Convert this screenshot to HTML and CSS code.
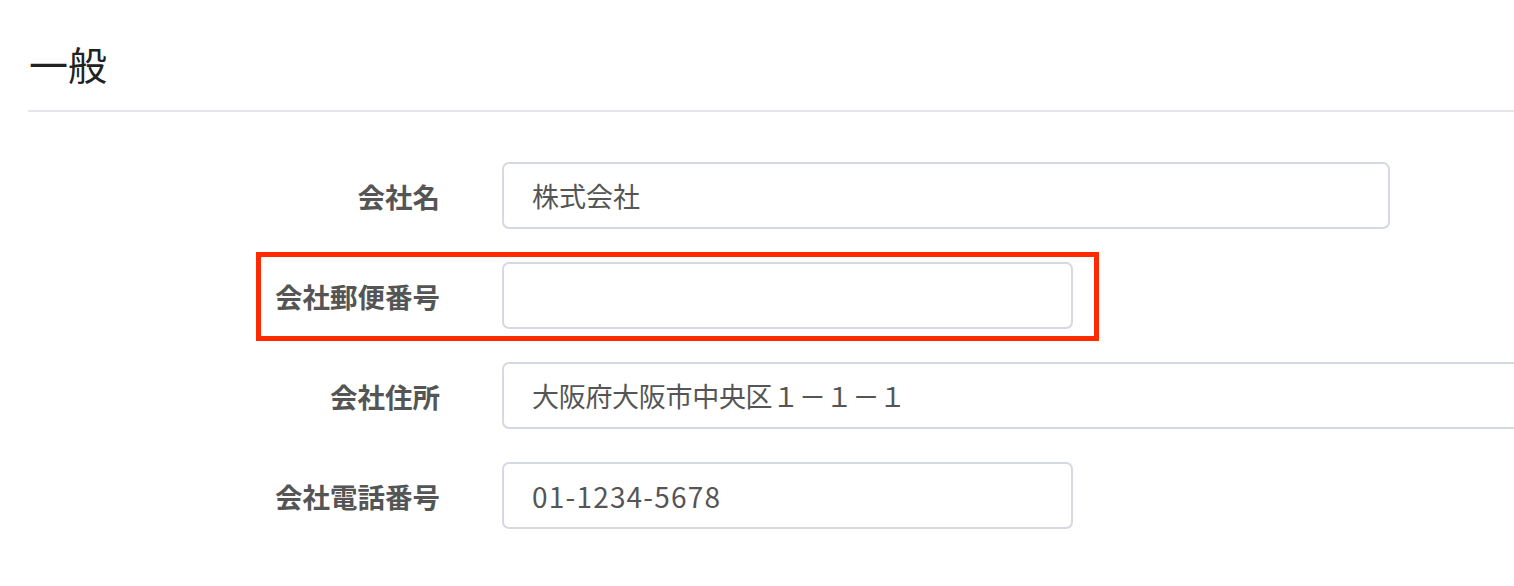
FILE: index.html
```html
<!DOCTYPE html>
<html lang="ja">
<head>
    <meta charset="UTF-8">
    <meta name="viewport" content="width=device-width, initial-scale=1.0">
    <title>一般</title>
    <link rel="stylesheet" href="styles.css">
</head>
<body>
    <div class="page">
        <h1>一般</h1>
        <hr class="divider">

        <!-- Company info -->
        <div class="form">
            <div class="row">
                <label class="label">会社名</label>
                <input class="field field-lg" type="text" value="株式会社">
            </div>
            <div class="row highlight">
                <label class="label">会社郵便番号</label>
                <input class="field field-md" type="text" value="">
            </div>
            <div class="row">
                <label class="label">会社住所</label>
                <input class="field field-xl address" type="text" value="大阪府大阪市中央区１－１－１">
            </div>
            <div class="row">
                <label class="label">会社電話番号</label>
                <input class="field field-md phone" type="text" value="01-1234-5678">
            </div>
        </div>
    </div>
</body>
</html>
```

FILE: styles.css
```css
body {
    font-family: "Noto Sans CJK JP", "Liberation Sans", sans-serif;
    background-color: #fff;
    margin: 0;
    padding: 0;
    overflow: hidden;
}
.page {
    padding: 38px 0 0 28px;
}
h1 {
    font-size: 39px;
    font-weight: 400;
    line-height: 50px;
    color: #222;
    margin: 0 0 22px 1px;
}
.divider {
    border: none;
    height: 2px;
    background-color: #e6e6ea;
    margin: 0;
}
.form {
    display: flex;
    flex-direction: column;
    gap: 33px;
    padding-top: 50px;
}
.row {
    display: grid;
    grid-template-columns: 412px auto;
    column-gap: 62px;
    align-items: center;
    position: relative;
}
.label {
    text-align: right;
    font-size: 27.5px;
    font-weight: 700;
    color: #555;
}
.field {
    box-sizing: border-box;
    height: 67px;
    padding: 0 28px;
    border: 2px solid #d6d9e2;
    border-radius: 7px;
    font-family: "Noto Sans CJK JP", "Liberation Sans", sans-serif;
    font-size: 27px;
    color: #555;
    background-color: #fff;
    outline: none;
}
.field-lg {
    width: 888px;
}
.field-md {
    width: 571px;
}
.field-xl {
    width: 1100px;
}
.address {
    letter-spacing: -0.3px;
}
.phone {
    font-size: 28px;
    letter-spacing: 1.2px;
}
.highlight::after {
    content: "";
    position: absolute;
    top: -10px;
    bottom: -12px;
    left: 228px;
    width: 843px;
    box-sizing: border-box;
    border: 5px solid #ff2a00;
    pointer-events: none;
}
```
